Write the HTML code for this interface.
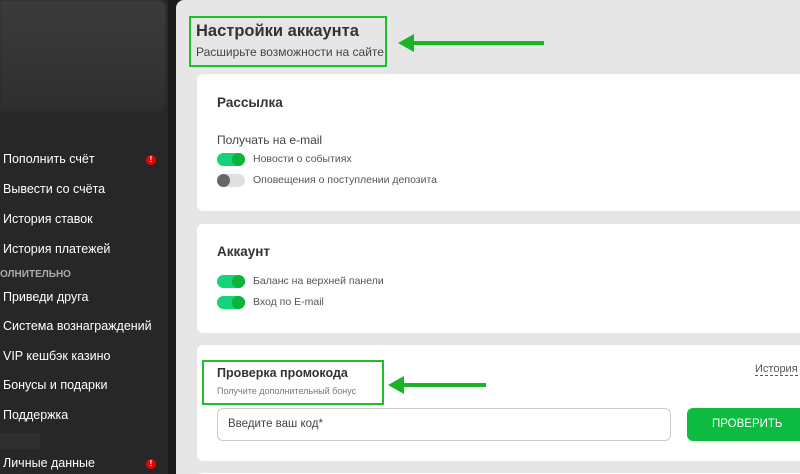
<!DOCTYPE html>
<html><head><meta charset="utf-8"><style>
*{margin:0;padding:0;box-sizing:border-box}
html,body{width:800px;height:474px;overflow:hidden}
body{background:#1b1b1b;font-family:"Liberation Sans","Noto Sans CJK SC",sans-serif;position:relative}
.side{position:absolute;left:0;top:0;width:168px;height:474px;background:#272727}
.blur{position:absolute;left:0;top:0;width:166px;height:112px;border-radius:0 8px 8px 0;background:linear-gradient(180deg,#3b3b3b,#343434 60%,#2e2e2e);filter:blur(1px)}
.it{position:absolute;left:3px;color:#fff;font-size:12.5px}
.dot{position:absolute;left:146px;width:10px;height:10px;border-radius:50%;background:#e00;color:#fff;font-size:8px;line-height:10px;text-align:center;font-weight:bold}
.sec{position:absolute;left:0;top:269px;color:#aaa;font-size:10px;font-weight:bold}
.main{position:absolute;left:176px;top:0;width:624px;height:474px;background:#e6e6e6;border-radius:8px 0 0 0;overflow:hidden}
.card{position:absolute;left:21px;width:620px;background:#fff;border-radius:6px}
h1{position:absolute;font-size:16px;color:#333;font-weight:bold}
.box{position:absolute;border:2px solid #1fbe2b}
.t{position:absolute;color:#333}
.tg{position:absolute;left:20px;width:28px;height:13px;border-radius:7px;background:#14d37b}
.tg::after{content:"";position:absolute;right:0;top:0;width:13px;height:13px;border-radius:50%;background:#0db33a}
.tg.off{background:#e0e0e0}.tg.off::after{left:0;right:auto;background:#666}
.lab{position:absolute;left:56px;font-size:11px;color:#555}
.arrow{position:absolute;height:4px;background:#19b526}
.arrow::before{content:"";position:absolute;left:-14px;top:-7px;border-right:16px solid #19b526;border-top:9px solid transparent;border-bottom:9px solid transparent}
</style></head><body>
<div class="side">
<div class="blur"></div>
<div class="it" style="top:152px">Пополнить счёт</div><div class="dot" style="top:155px">!</div>
<div class="it" style="top:182px">Вывести со счёта</div>
<div class="it" style="top:212px">История ставок</div>
<div class="it" style="top:242px">История платежей</div>
<div class="sec">ОЛНИТЕЛЬНО</div>
<div class="it" style="top:290px">Приведи друга</div>
<div class="it" style="top:319px">Система вознаграждений</div>
<div class="it" style="top:349px">VIP кешбэк казино</div>
<div class="it" style="top:378px">Бонусы и подарки</div>
<div class="it" style="top:408px">Поддержка</div>
<div style="position:absolute;left:0;top:433px;width:40px;height:16px;background:#2f2f2f"></div>
<div class="it" style="top:456px">Личные данные</div><div class="dot" style="top:459px">!</div>
</div>
<div class="main">
<div class="box" style="left:13px;top:16px;width:198px;height:51px"></div>
<h1 style="left:20px;top:22px;font-size:16.5px">Настройки аккаунта</h1>
<div class="t" style="left:20px;top:45px;font-size:12px;color:#444">Расширьте возможности на сайте</div>
<div class="arrow" style="left:236px;top:41px;width:132px"></div>
<div class="card" style="top:74px;height:137px">
<div class="t" style="left:20px;top:21px;font-size:13.5px;font-weight:bold">Рассылка</div>
<div class="t" style="left:20px;top:59px;font-size:12px;color:#444">Получать на e-mail</div>
<div class="tg" style="top:79px"></div><div class="lab" style="top:79px;font-size:10.5px">Новости о событиях</div>
<div class="tg off" style="top:100px"></div><div class="lab" style="top:100px;font-size:10.5px">Оповещения о поступлении депозита</div>
</div>
<div class="card" style="top:224px;height:109px">
<div class="t" style="left:20px;top:20px;font-size:13.5px;font-weight:bold">Аккаунт</div>
<div class="tg" style="top:51px"></div><div class="lab" style="top:51px;font-size:10.5px">Баланс на верхней панели</div>
<div class="tg" style="top:72px"></div><div class="lab" style="top:72px;font-size:10.5px">Вход по E-mail</div>
</div>
<div class="card" style="top:345px;height:116px">
<div class="t" style="left:20px;top:21px;font-size:12.5px;font-weight:bold">Проверка промокода</div>
<div class="t" style="left:20px;top:41px;font-size:9px;color:#777">Получите дополнительный бонус</div>
<div class="t" style="left:558px;top:18px;font-size:11px;color:#555;border-bottom:1px dashed #555">История</div>
<div style="position:absolute;left:20px;top:63px;width:454px;height:33px;border:1px solid #ccc;border-radius:6px;font-size:11.5px;color:#444;padding:9px 10px">Введите ваш код*</div>
<div style="position:absolute;left:490px;top:63px;width:120px;height:33px;border-radius:6px;background:#0cbb3f;color:#fff;font-size:11.5px;line-height:33px;padding-left:25px">ПРОВЕРИТЬ</div>
</div>
<div class="box" style="left:26px;top:360px;width:182px;height:45px"></div>
<div class="arrow" style="left:226px;top:383px;width:84px"></div>
<div class="card" style="top:473px;height:10px"></div>
</div>
</body></html>
